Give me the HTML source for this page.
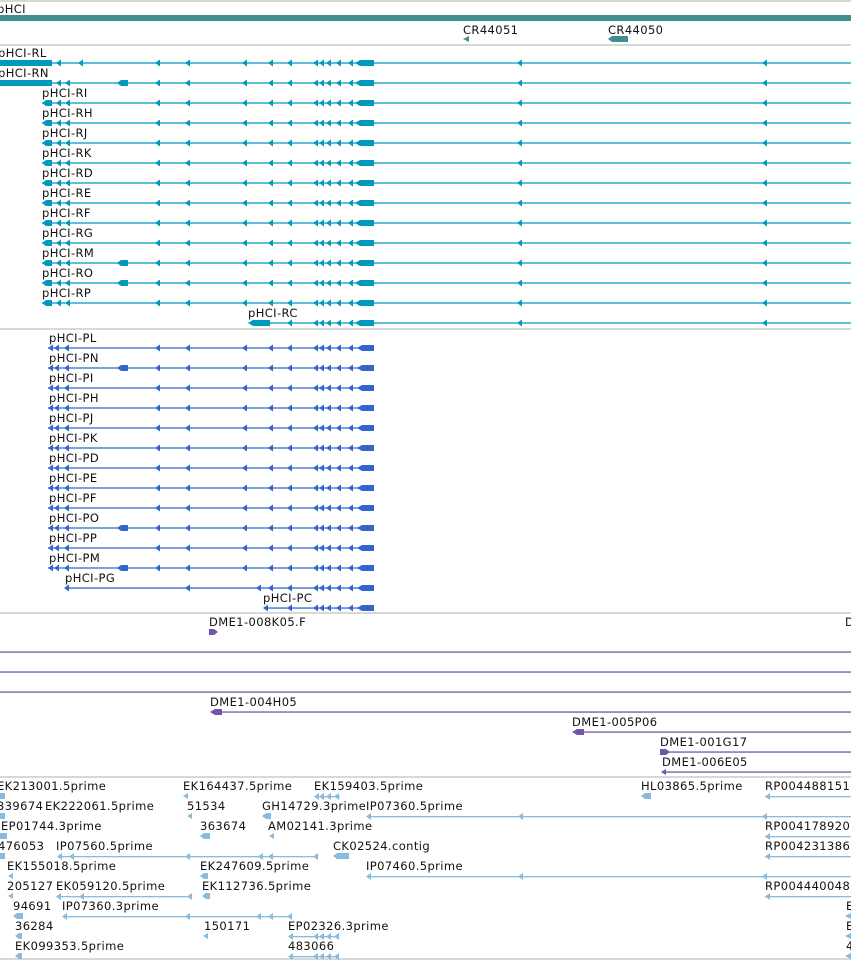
<!DOCTYPE html>
<html><head><meta charset="utf-8"><style>
body{margin:0;background:#fff;width:851px;height:961px;overflow:hidden}
svg{display:block}
text{font-family:"DejaVu Sans","Liberation Sans",sans-serif;font-size:11.5px;fill:#111;letter-spacing:0.4px}
</style></head><body>
<svg width="851" height="961" viewBox="0 0 851 961" xmlns="http://www.w3.org/2000/svg">
<defs>
<polygon id="a" points="0,0 5,-3.5 5,3.5"/>
<g id="rcore">
 <line x1="42" y1="0" x2="851" y2="0" stroke="#0099bb" stroke-width="1.3"/>
 <use href="#a" x="155"/><use href="#a" x="185"/><use href="#a" x="242"/><use href="#a" x="268"/><use href="#a" x="287"/><use href="#a" x="313"/><use href="#a" x="319"/><use href="#a" x="326"/><use href="#a" x="336"/><use href="#a" x="348"/>
 <polygon points="355,0 360,-3 374,-3 374,3 360,3"/>
 <use href="#a" x="517"/><use href="#a" x="762"/>
</g>
<g id="rleft"><polygon points="42,0 46,-3 52,-3 52,3 46,3"/><use href="#a" x="56"/><use href="#a" x="65"/></g>
<g id="pcore">
 <line x1="48" y1="0" x2="374" y2="0" stroke="#3366cc" stroke-width="1.3"/>
 <use href="#a" x="48"/><use href="#a" x="54"/><use href="#a" x="64"/>
 <use href="#a" x="155"/><use href="#a" x="185"/><use href="#a" x="242"/><use href="#a" x="268"/><use href="#a" x="287"/><use href="#a" x="313"/><use href="#a" x="319"/><use href="#a" x="326"/><use href="#a" x="336"/><use href="#a" x="348"/>
 <polygon points="357,0 362,-3 374,-3 374,3 362,3"/>
</g>
</defs>
<g stroke="#c0c0c0" stroke-width="1.3">
<line x1="0" y1="1" x2="851" y2="1"/><line x1="0" y1="45" x2="851" y2="45"/><line x1="0" y1="329" x2="851" y2="329"/><line x1="0" y1="613" x2="851" y2="613"/><line x1="0" y1="777" x2="851" y2="777"/><line x1="0" y1="959" x2="851" y2="959"/>
</g>
<text x="-3" y="13">pHCI</text>
<rect x="0" y="15" width="851" height="6" fill="#3f8e90"/>
<text x="463" y="34">CR44051</text><text x="608" y="34">CR44050</text>
<g fill="#3f8e90"><polygon points="463,39 469,36 469,42"/><polygon points="608,39 612,36 628,36 628,42 612,42"/></g>
<g fill="#0099bb">
<g transform="translate(0,63)"><use href="#rcore"/><rect x="0" y="-3" width="52" height="6"/><use href="#a" x="56"/><use href="#a" x="78"/></g>
<g transform="translate(0,83)"><use href="#rcore"/><rect x="0" y="-3" width="52" height="6"/><use href="#a" x="56"/><use href="#a" x="65"/><polygon points="117,0 121,-3 128,-3 128,3 121,3"/></g>
<g transform="translate(0,103)"><use href="#rcore"/><use href="#rleft"/></g>
<g transform="translate(0,123)"><use href="#rcore"/><use href="#rleft"/></g>
<g transform="translate(0,143)"><use href="#rcore"/><use href="#rleft"/></g>
<g transform="translate(0,163)"><use href="#rcore"/><use href="#rleft"/></g>
<g transform="translate(0,183)"><use href="#rcore"/><use href="#rleft"/></g>
<g transform="translate(0,203)"><use href="#rcore"/><use href="#rleft"/></g>
<g transform="translate(0,223)"><use href="#rcore"/><use href="#rleft"/></g>
<g transform="translate(0,243)"><use href="#rcore"/><use href="#rleft"/></g>
<g transform="translate(0,263)"><use href="#rcore"/><use href="#rleft"/><polygon points="117,0 121,-3 128,-3 128,3 121,3"/></g>
<g transform="translate(0,283)"><use href="#rcore"/><use href="#rleft"/><polygon points="117,0 121,-3 128,-3 128,3 121,3"/></g>
<g transform="translate(0,303)"><use href="#rcore"/><use href="#rleft"/></g>
<g transform="translate(0,323)"><line x1="250" y1="0" x2="851" y2="0" stroke="#0099bb" stroke-width="1.3"/><polygon points="248,0 253,-3 270,-3 270,3 253,3"/><use href="#a" x="287"/><use href="#a" x="313"/><use href="#a" x="319"/><use href="#a" x="326"/><use href="#a" x="336"/><use href="#a" x="348"/><polygon points="355,0 360,-3 374,-3 374,3 360,3"/><use href="#a" x="517"/><use href="#a" x="762"/></g>
</g>
<text x="-2" y="57">pHCI-RL</text><text x="-2" y="77">pHCI-RN</text>
<text x="42" y="97">pHCI-RI</text><text x="42" y="117">pHCI-RH</text><text x="42" y="137">pHCI-RJ</text><text x="42" y="157">pHCI-RK</text><text x="42" y="177">pHCI-RD</text><text x="42" y="197">pHCI-RE</text><text x="42" y="217">pHCI-RF</text><text x="42" y="237">pHCI-RG</text><text x="42" y="257">pHCI-RM</text><text x="42" y="277">pHCI-RO</text><text x="42" y="297">pHCI-RP</text><text x="248" y="317">pHCI-RC</text>
<g fill="#3366cc">
<use href="#pcore" y="348"/>
<g transform="translate(0,368)"><use href="#pcore"/><polygon points="117,0 121,-3 128,-3 128,3 121,3"/></g>
<use href="#pcore" y="388"/><use href="#pcore" y="408"/><use href="#pcore" y="428"/><use href="#pcore" y="448"/><use href="#pcore" y="468"/><use href="#pcore" y="488"/><use href="#pcore" y="508"/>
<g transform="translate(0,528)"><use href="#pcore"/><polygon points="117,0 121,-3 128,-3 128,3 121,3"/></g>
<use href="#pcore" y="548"/>
<g transform="translate(0,568)"><use href="#pcore"/><polygon points="117,0 121,-3 128,-3 128,3 121,3"/></g>
<g transform="translate(0,588)"><rect x="66" y="-0.6" width="308" height="1.3"/><use href="#a" x="64"/><use href="#a" x="185"/><use href="#a" x="256"/><use href="#a" x="268"/><use href="#a" x="287"/><use href="#a" x="313"/><use href="#a" x="319"/><use href="#a" x="326"/><use href="#a" x="336"/><use href="#a" x="348"/><polygon points="357,0 362,-3 374,-3 374,3 362,3"/></g>
<g transform="translate(0,608)"><rect x="266" y="-0.6" width="108" height="1.3"/><use href="#a" x="263"/><use href="#a" x="287"/><use href="#a" x="313"/><use href="#a" x="319"/><use href="#a" x="326"/><use href="#a" x="336"/><use href="#a" x="348"/><polygon points="357,0 362,-3 374,-3 374,3 362,3"/></g>
</g>
<text x="49" y="342">pHCI-PL</text><text x="49" y="362">pHCI-PN</text><text x="49" y="382">pHCI-PI</text><text x="49" y="402">pHCI-PH</text><text x="49" y="422">pHCI-PJ</text><text x="49" y="442">pHCI-PK</text><text x="49" y="462">pHCI-PD</text><text x="49" y="482">pHCI-PE</text><text x="49" y="502">pHCI-PF</text><text x="49" y="522">pHCI-PO</text><text x="49" y="542">pHCI-PP</text><text x="49" y="562">pHCI-PM</text><text x="65" y="582">pHCI-PG</text><text x="263" y="602">pHCI-PC</text>
<g fill="#7055aa" stroke="none">
<polygon points="209,629 214,629 218,632 214,635 209,635"/>
<rect x="0" y="651.4" width="851" height="1.3"/><rect x="0" y="671.4" width="851" height="1.3"/><rect x="0" y="691.4" width="851" height="1.3"/>
<rect x="212" y="711.4" width="639" height="1.3"/><polygon points="210,712 215,709 222,709 222,715 215,715"/>
<rect x="574" y="731.4" width="277" height="1.3"/><polygon points="572,732 577,729 584,729 584,735 577,735"/>
<rect x="660" y="751.4" width="191" height="1.3"/><polygon points="660,749 666,749 670,752 666,755 660,755"/>
<rect x="662" y="771.4" width="189" height="1.3"/><polygon points="661,772 666,769 666,775"/>
</g>
<text x="209" y="626">DME1-008K05.F</text><text x="845" y="626">D</text>
<text x="210" y="706">DME1-004H05</text><text x="572" y="726">DME1-005P06</text><text x="660" y="746">DME1-001G17</text><text x="662" y="766">DME1-006E05</text>
<g fill="#88bbdd">
<rect x="0" y="793" width="5" height="6"/>
<polygon points="183,796 188,793 188,799"/>
<rect x="315" y="796" width="25" height="1.3"/><use href="#a" x="314" y="796.5"/><use href="#a" x="319" y="796.5"/><use href="#a" x="326" y="796.5"/><use href="#a" x="334" y="796.5"/>
<polygon points="641,796 645,793 651,793 651,799 645,799"/>
<rect x="765" y="796" width="86" height="1.3"/><use href="#a" x="765" y="796.5"/>
<rect x="0" y="813" width="5" height="6"/>
<polygon points="187,816 192,813 192,819"/>
<polygon points="262,816 266,813 271,813 271,819 266,819"/>
<rect x="368" y="816" width="483" height="1.3"/><use href="#a" x="366" y="816.5"/><use href="#a" x="518" y="816.5"/><use href="#a" x="762" y="816.5"/>
<rect x="0" y="833" width="7" height="6"/>
<polygon points="200,836 204,833 210,833 210,839 204,839"/>
<polygon points="269,836 274,833 274,839"/>
<rect x="765" y="836" width="86" height="1.3"/><use href="#a" x="765" y="836.5"/>
<rect x="0" y="853" width="5" height="6"/>
<rect x="58" y="856" width="260" height="1.3"/><use href="#a" x="57" y="856.5"/><use href="#a" x="69" y="856.5"/><use href="#a" x="185" y="856.5"/><use href="#a" x="258" y="856.5"/><use href="#a" x="268" y="856.5"/><use href="#a" x="313" y="856.5"/>
<polygon points="333,856 337,853 349,853 349,859 337,859"/>
<rect x="765" y="856" width="86" height="1.3"/><use href="#a" x="765" y="856.5"/>
<polygon points="200,876 204,873 208,873 208,879 204,879"/>
<polygon points="8,876 13,873 13,879"/>
<rect x="368" y="876" width="483" height="1.3"/><use href="#a" x="366" y="876.5"/><use href="#a" x="518" y="876.5"/><use href="#a" x="762" y="876.5"/>
<polygon points="8,896 13,893 13,899"/>
<rect x="58" y="896" width="134" height="1.3"/><use href="#a" x="56" y="896.5"/><use href="#a" x="79" y="896.5"/><use href="#a" x="187" y="896.5"/>
<polygon points="202,896 206,893 210,893 210,899 206,899"/>
<rect x="765" y="896" width="86" height="1.3"/><use href="#a" x="765" y="896.5"/>
<polygon points="13,916 17,913 23,913 23,919 17,919"/>
<rect x="63" y="916" width="228" height="1.3"/><use href="#a" x="62" y="916.5"/><use href="#a" x="185" y="916.5"/><use href="#a" x="256" y="916.5"/><use href="#a" x="268" y="916.5"/><use href="#a" x="287" y="916.5"/>
<polygon points="845,916 851,913 851,919"/>
<polygon points="15,936 19,933 22,933 22,939 19,939"/>
<polygon points="203,936 208,933 208,939"/>
<rect x="289" y="936" width="50" height="1.3"/><use href="#a" x="288" y="936.5"/><use href="#a" x="313" y="936.5"/><use href="#a" x="319" y="936.5"/><use href="#a" x="326" y="936.5"/><use href="#a" x="334" y="936.5"/>
<polygon points="845,936 851,933 851,939"/>
<polygon points="15,956 19,953 22,953 22,959 19,959"/>
<rect x="289" y="956" width="50" height="1.3"/><use href="#a" x="288" y="956.5"/><use href="#a" x="313" y="956.5"/><use href="#a" x="319" y="956.5"/><use href="#a" x="326" y="956.5"/><use href="#a" x="334" y="956.5"/>
<polygon points="845,956 851,953 851,959"/>
</g>
<text x="-3" y="790">EK213001.5prime</text><text x="183" y="790">EK164437.5prime</text><text x="314" y="790">EK159403.5prime</text><text x="641" y="790">HL03865.5prime</text><text x="765" y="790">RP004488151</text>
<text x="-3" y="810">339674</text><text x="45" y="810">EK222061.5prime</text><text x="187" y="810">51534</text><text x="262" y="810">GH14729.3prime</text><text x="366" y="810">IP07360.5prime</text>
<text x="1" y="830">EP01744.3prime</text><text x="200" y="830">363674</text><text x="268" y="830">AM02141.3prime</text><text x="765" y="830">RP004178920</text>
<text x="-2" y="850">476053</text><text x="56" y="850">IP07560.5prime</text><text x="333" y="850">CK02524.contig</text><text x="765" y="850">RP004231386</text>
<text x="7" y="870">EK155018.5prime</text><text x="200" y="870">EK247609.5prime</text><text x="366" y="870">IP07460.5prime</text>
<text x="7" y="890">205127</text><text x="56" y="890">EK059120.5prime</text><text x="202" y="890">EK112736.5prime</text><text x="765" y="890">RP004440048</text>
<text x="13" y="910">94691</text><text x="62" y="910">IP07360.3prime</text><text x="846" y="910">E</text>
<text x="15" y="930">36284</text><text x="204" y="930">150171</text><text x="288" y="930">EP02326.3prime</text><text x="846" y="930">E</text>
<text x="15" y="950">EK099353.5prime</text><text x="288" y="950">483066</text><text x="846" y="950">4</text>
</svg>
</body></html>
